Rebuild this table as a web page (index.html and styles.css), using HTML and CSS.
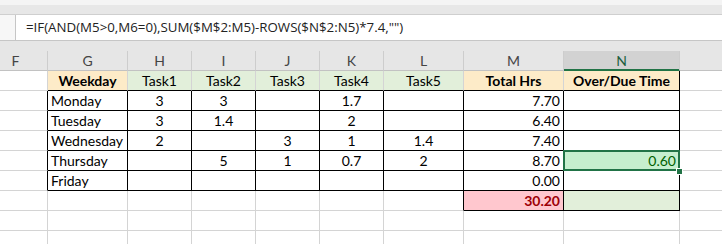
FILE: index.html
```html
<!DOCTYPE html>
<html lang="en">
<head>
<meta charset="utf-8">
<title>Weekly hours</title>
<link rel="stylesheet" href="styles.css">
</head>
<body>
<div class="ribbon"></div>
<div class="fbar">
  <div class="fbar-handle"></div>
  <div class="fbox">=IF(AND(M5&gt;0,M6=0),SUM($M$2:M5)-ROWS($N$2:N5)*7.4,"")</div>
</div>
<div class="band"></div>
<div class="sheet">
  <!-- column headers -->
  <div class="hd">F</div><div class="hd">G</div><div class="hd">H</div><div class="hd">I</div><div class="hd">J</div><div class="hd">K</div><div class="hd">L</div><div class="hd">M</div><div class="hd hd-sel">N</div><div class="hd hd-last"></div>

  <!-- table header -->
  <div class="c"></div>
  <div class="c ct b peach kb">Weekday</div>
  <div class="c ct green kb">Task1</div>
  <div class="c ct green kb">Task2</div>
  <div class="c ct green kb">Task3</div>
  <div class="c ct green kb">Task4</div>
  <div class="c ct green kb">Task5</div>
  <div class="c ct b peach kb">Total Hrs</div>
  <div class="c ct b peach kb kr">Over/Due Time</div>
  <div class="c"></div>

  <!-- Monday -->
  <div class="c kr"></div>
  <div class="c kr kb">Monday</div>
  <div class="c ct kr kb">3</div>
  <div class="c ct kr kb">3</div>
  <div class="c ct kr kb"></div>
  <div class="c ct kr kb">1.7</div>
  <div class="c ct kr kb"></div>
  <div class="c rt kr kb">7.70</div>
  <div class="c rt kr kb"></div>
  <div class="c"></div>

  <!-- Tuesday -->
  <div class="c kr"></div>
  <div class="c kr kb">Tuesday</div>
  <div class="c ct kr kb">3</div>
  <div class="c ct kr kb">1.4</div>
  <div class="c ct kr kb"></div>
  <div class="c ct kr kb">2</div>
  <div class="c ct kr kb"></div>
  <div class="c rt kr kb">6.40</div>
  <div class="c rt kr kb"></div>
  <div class="c"></div>

  <!-- Wednesday -->
  <div class="c kr"></div>
  <div class="c kr kb">Wednesday</div>
  <div class="c ct kr kb">2</div>
  <div class="c ct kr kb"></div>
  <div class="c ct kr kb">3</div>
  <div class="c ct kr kb">1</div>
  <div class="c ct kr kb">1.4</div>
  <div class="c rt kr kb">7.40</div>
  <div class="c rt kr kb"></div>
  <div class="c"></div>

  <!-- Thursday -->
  <div class="c kr"></div>
  <div class="c kr kb">Thursday</div>
  <div class="c ct kr kb"></div>
  <div class="c ct kr kb">5</div>
  <div class="c ct kr kb">1</div>
  <div class="c ct kr kb">0.7</div>
  <div class="c ct kr kb">2</div>
  <div class="c rt kr kb">8.70</div>
  <div class="c rt kr kb good active">0.60<span class="fill-handle"></span></div>
  <div class="c"></div>

  <!-- Friday -->
  <div class="c kr"></div>
  <div class="c kr kb">Friday</div>
  <div class="c ct kr kb"></div>
  <div class="c ct kr kb"></div>
  <div class="c ct kr kb"></div>
  <div class="c ct kr kb"></div>
  <div class="c ct kr kb"></div>
  <div class="c rt kr kb">0.00</div>
  <div class="c rt kr kb"></div>
  <div class="c"></div>

  <!-- totals -->
  <div class="c"></div>
  <div class="c"></div>
  <div class="c"></div>
  <div class="c"></div>
  <div class="c"></div>
  <div class="c"></div>
  <div class="c kr"></div>
  <div class="c rt b bad kr kb">30.20</div>
  <div class="c green kr kb"></div>
  <div class="c"></div>

  <!-- empty rows -->
  <div class="c"></div><div class="c"></div><div class="c"></div><div class="c"></div><div class="c"></div><div class="c"></div><div class="c"></div><div class="c"></div><div class="c"></div><div class="c"></div>
  <div class="c"></div><div class="c"></div><div class="c"></div><div class="c"></div><div class="c"></div><div class="c"></div><div class="c"></div><div class="c"></div><div class="c"></div><div class="c"></div>
</div>
</body>
</html>
```
FILE: styles.css
```css
html, body {
  margin: 0;
  padding: 0;
  width: 722px;
  height: 244px;
  overflow: hidden;
  background: #ffffff;
}

body {
  font-family: Lato, "Liberation Sans", sans-serif;
  font-size: 14px;
  color: #000;
}

/* bottom edge of the ribbon */
.ribbon {
  box-sizing: border-box;
  height: 15px;
  background: linear-gradient(#f4f4f4 0 5px, #e7e7e7 5px);
  border-bottom: 1px solid #cfcfcf;
}

/* formula bar */
.fbar {
  box-sizing: border-box;
  height: 26px;
  display: flex;
  background: #ffffff;
  border-bottom: 1px solid #c6c6c6;
}

.fbar-handle {
  width: 15px;
  border-right: 1px solid #c6c6c6;
  background: #f7f7f7;
}

.fbox {
  flex: 1;
  padding-left: 10px;
  font-family: "Open Sans", sans-serif;
  font-size: 13.3px;
  line-height: 24px;
  color: #222;
  white-space: nowrap;
  overflow: hidden;
}

.band {
  height: 10px;
  background: #e6e6e6;
}

/* worksheet grid */
.sheet {
  margin-left: -16px;
  display: grid;
  grid-template-columns: 64px 80px 64px 64px 64px 64px 80px 100px 116px 64px;
  grid-auto-rows: 20px;
}

.hd {
  box-sizing: border-box;
  background: #e6e6e6;
  border-right: 1px solid #cdcdcd;
  border-bottom: 1px solid #c2c2c2;
  color: #444;
  text-align: center;
  line-height: 18px;
  padding-top: 1px;
}

.hd-sel {
  background: #d2d2d2;
  color: #21603e;
  border-bottom-color: #217346;
  box-shadow: inset 0 -1px 0 #217346;
}

.hd-last {
  border-right: none;
}

.c {
  box-sizing: border-box;
  border-right: 1px solid #d4d4d4;
  border-bottom: 1px solid #d4d4d4;
  padding: 1px 3px 0;
  line-height: 18px;
  white-space: nowrap;
  position: relative;
}

.ct { text-align: center; }
.rt { text-align: right; }
.b { font-weight: bold; }

.kr { border-right-color: #000; }
.kb { border-bottom-color: #000; }

.peach { background: #fdebc8; }
.green { background: #e2efda; }
.good { background: #c6efce; color: #006100; }
.bad { background: #ffc7ce; color: #9c0006; }

/* active cell outline */
.active::after {
  content: "";
  position: absolute;
  left: -1px;
  top: -1px;
  width: 117px;
  height: 21px;
  box-sizing: border-box;
  border: 2px solid #217346;
  pointer-events: none;
}

.fill-handle {
  position: absolute;
  right: -3px;
  bottom: -4px;
  width: 5px;
  height: 5px;
  background: #217346;
  outline: 1px solid #fff;
  z-index: 2;
}
```
